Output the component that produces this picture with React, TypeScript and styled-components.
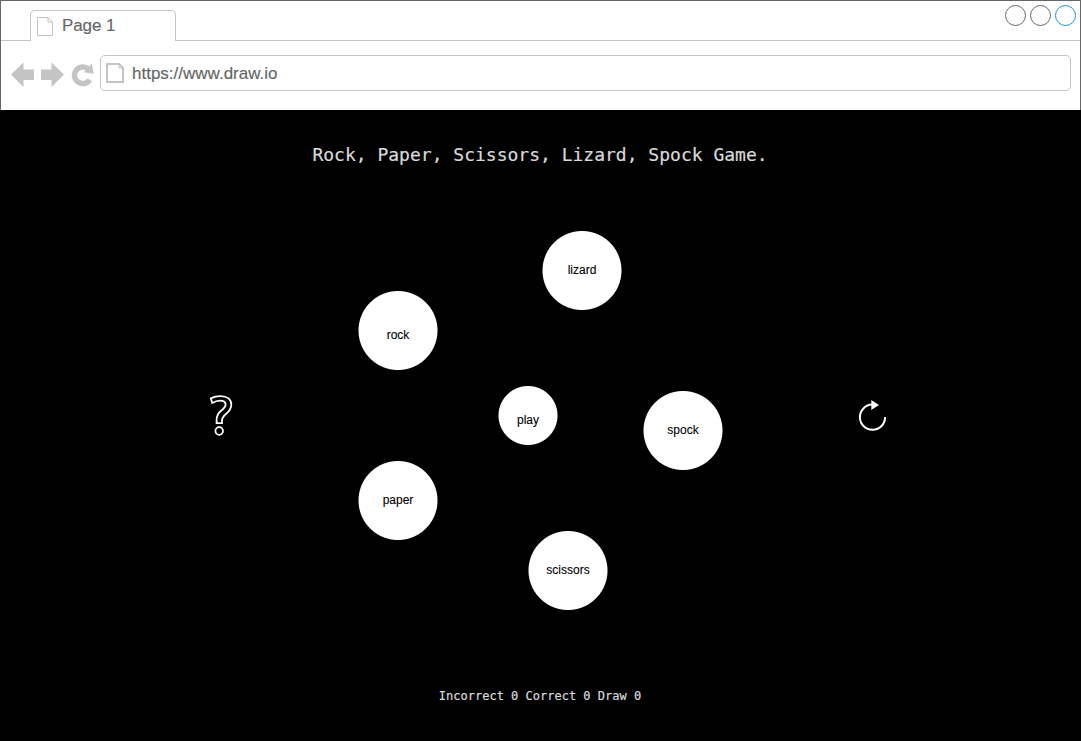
import React from "react";
import styled, { createGlobalStyle } from "styled-components";

const Global = createGlobalStyle`
  body { margin: 0; background: #000; }
  * { box-sizing: border-box; }
  svg { display: block; flex: none; }
`;

const Window = styled.div`
  width: 1081px;
  height: 741px;
  display: flex;
  flex-direction: column;
  overflow: hidden;
  background: #000;
  font-family: "Liberation Sans", Helvetica, Arial, sans-serif;
`;

const Chrome = styled.header`
  height: 110px;
  flex: none;
  background: #fff;
  border: 1px solid #666;
  border-bottom: 0;
`;

const TabStrip = styled.div`
  height: 40px;
  display: flex;
  align-items: flex-end;
`;

const StripLine = styled.div<{ $width?: number }>`
  ${(p) => (p.$width ? `width: ${p.$width}px;` : "flex: 1;")}
  height: 40px;
  border-bottom: 1px solid #c4c4c4;
  display: flex;
  justify-content: flex-end;
  padding: 4px 4px 0 0;
  gap: 4px;
`;

const Tab = styled.div`
  width: 146px;
  height: 31px;
  border: 1px solid #c4c4c4;
  border-bottom: 0;
  border-radius: 5px 5px 0 0;
  display: flex;
  padding: 6px 0 0 6px;
  gap: 9px;
`;

const BarText = styled.span`
  font-size: 17px;
  line-height: 20px;
  color: #666;
  white-space: nowrap;
  -webkit-text-stroke: 0.15px #666;
`;

const TabText = styled(BarText)`
  margin-top: -1px;
  letter-spacing: -0.1px;
`;

const UrlText = styled(BarText)`
  padding-top: 2px;
`;

const WindowDot = styled.i<{ $color: string }>`
  width: 21px;
  height: 21px;
  border: 1px solid ${(p) => p.$color};
  border-radius: 50%;
`;

const Toolbar = styled.nav`
  display: flex;
  align-items: center;
  height: 36px;
  margin: 14px 9px 0 10px;
`;

const NavIcons = styled.div`
  width: 89px;
  padding-top: 3px;
`;

const Address = styled.div`
  flex: 1;
  height: 36px;
  border: 1px solid #c4c4c4;
  border-radius: 5px;
  display: flex;
  align-items: center;
  padding-left: 5px;
  gap: 8px;
`;

const Game = styled.main`
  height: 631px;
  display: flex;
  flex-direction: column;
  align-items: center;
  color: #d9d9d9;
  font-family: "DejaVu Sans Mono", monospace;
  -webkit-text-stroke: 0.2px #d9d9d9;
`;

const Title = styled.h1`
  margin: 34px 0 0;
  padding-right: 1px;
  font-size: 18px;
  font-weight: 400;
  line-height: 21px;
  white-space: nowrap;
`;

const Arena = styled.section`
  align-self: flex-start;
  margin: 55px 0 0 209px;
  height: 400px;
  display: grid;
  grid-template-columns: 132px 517px 30px;
`;

const ToolIcon = styled.div<{ $top: number }>`
  padding-top: ${(p) => p.$top}px;
`;

const Board = styled.div`
  position: relative;
  height: 400px;
`;

const Node = styled.div<{ $x: number; $y: number; $size: number; $drop: number }>`
  position: absolute;
  left: ${(p) => p.$x}px;
  top: ${(p) => p.$y}px;
  width: ${(p) => p.$size}px;
  height: ${(p) => p.$size + 1}px;
  display: flex;
  align-items: center;
  justify-content: center;
  padding: ${(p) => p.$drop}px 0 1px;
  background: radial-gradient(
    circle closest-side at 50% 50%,
    #fff calc(100% - 1px),
    transparent 100%
  );
  color: #000;
  font: 12px/14px "Liberation Sans", Helvetica, Arial, sans-serif;
  -webkit-text-stroke: 0.1px #000;
`;

const Score = styled.footer`
  margin-top: 68px;
  padding-right: 1px;
  font-size: 12px;
  line-height: 16px;
  white-space: pre;
`;

const nodes = [
  { label: "lizard", x: 201, y: 10, size: 80, drop: 0 },
  { label: "rock", x: 17, y: 70, size: 80, drop: 10 },
  { label: "play", x: 157, y: 165, size: 60, drop: 10 },
  { label: "spock", x: 302, y: 170, size: 80, drop: 0 },
  { label: "paper", x: 17, y: 240, size: 80, drop: 0 },
  { label: "scissors", x: 187, y: 310, size: 80, drop: 0 },
];

const PageIcon = ({ w, h, stroke }: { w: number; h: number; stroke: number }) => {
  const s = stroke / 2;
  const fold = 5;
  return (
    <svg width={w} height={h} fill="none" stroke="#c4c4c4" strokeWidth={stroke}>
      <path d={`M${s} ${s}H${w - fold}L${w - s} ${fold}V${h - s}H${s}Z`} />
      <path d={`M${w - fold} ${s}V${fold}H${w - s}`} strokeWidth="1" />
    </svg>
  );
};

const NavigationIcons = () => (
  <svg width="84" height="26" viewBox="11 62 84 26" fill="#c4c4c4">
    <path d="M11 74.5L23.5 62.5V69.5H34V80H23.5V87Z" />
    <path d="M64 74.5L51.5 62.5V69.5H41V80H51.5V87Z" />
    <path d="M88.4 69.2A8.3 8.3 0 1 0 89.8 79.8" fill="none" stroke="#c4c4c4" strokeWidth="5.4" />
    <path d="M91.5 63.5L93.8 73.8L83.8 72.3Z" />
  </svg>
);

const HelpIcon = () => (
  <svg width="24" height="42" viewBox="209 395 24 42" fill="none" stroke="#fff" strokeWidth="1.8">
    <path d="M210.8 398.4C214 396.7 217.5 396.1 220.5 396.1C227.5 396.1 231.3 399.7 231.3 404.5C231.3 409 229 411.5 226 414C223 416.6 222 418 222 420.5V423.2H216.6V420C216.6 415.5 218 413.3 221 410.8C224 408.4 225.6 407 225.6 404.7C225.6 401.9 223.7 400.6 220 400.6C217 400.6 214.5 401.6 212.2 403Z" />
    <circle cx="219.2" cy="431" r="3.8" />
  </svg>
);

const RestartIcon = () => (
  <svg width="30" height="34" viewBox="858 399 30 34">
    <path d="M885.1 417A12.6 12.6 0 1 1 872.2 404.6" fill="none" stroke="#fff" strokeWidth="2" />
    <path d="M871.3 400L879 405L871.3 410Z" fill="#fff" />
  </svg>
);

export default function App() {
  return (
    <Window>
      <Global />
      <Chrome>
        <TabStrip>
          <StripLine $width={29} />
          <Tab>
            <PageIcon w={16} h={19} stroke={1} />
            <TabText>Page 1</TabText>
          </Tab>
          <StripLine>
            <WindowDot $color="#666" />
            <WindowDot $color="#666" />
            <WindowDot $color="#1e90e6" />
          </StripLine>
        </TabStrip>
        <Toolbar>
          <NavIcons>
            <NavigationIcons />
          </NavIcons>
          <Address>
            <PageIcon w={18} h={20} stroke={2} />
            <UrlText>https://www.draw.io</UrlText>
          </Address>
        </Toolbar>
      </Chrome>
      <Game>
        <Title>Rock, Paper, Scissors, Lizard, Spock Game.</Title>
        <Arena>
          <ToolIcon $top={175}>
            <HelpIcon />
          </ToolIcon>
          <Board>
            {nodes.map((n) => (
              <Node key={n.label} $x={n.x} $y={n.y} $size={n.size} $drop={n.drop}>
                {n.label}
              </Node>
            ))}
          </Board>
          <ToolIcon $top={179}>
            <RestartIcon />
          </ToolIcon>
        </Arena>
        <Score>Incorrect 0 Correct 0 Draw 0</Score>
      </Game>
    </Window>
  );
}
